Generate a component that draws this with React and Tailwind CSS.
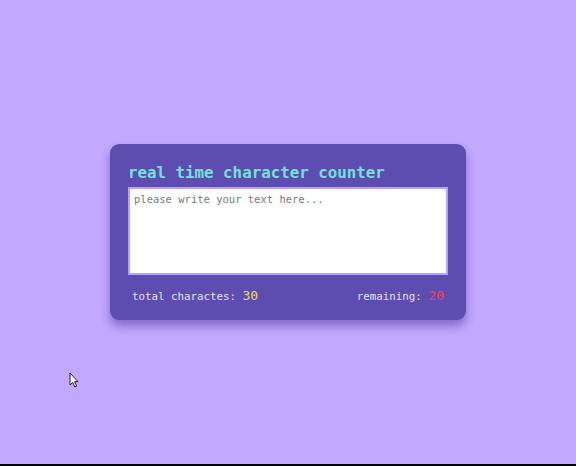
import React, { useState } from 'react'

export default function App() {
  const [text, setText] = useState('')
  const total = 30
  const remaining = 20

  return (
    <div className="w-[576px] h-[466px] bg-black">
      <div
        className="relative h-[464px] bg-[#c2a8fe] flex items-center justify-center"
        style={{ fontFamily: '"DejaVu Sans Mono", "Liberation Mono", monospace' }}
      >
        <div className="w-[356px] rounded-[9px] bg-[#5d4db1] px-[18px] pt-[18px] pb-[16px] shadow-[0_6px_10px_rgba(60,30,140,0.45)]">
          <h1 className="text-[15.8px] leading-[22px] font-bold text-[#6fe3d6]">
            real time character counter
          </h1>
          <textarea
            value={text}
            onChange={(e) => setText(e.target.value)}
            placeholder="please write your text here..."
            className="mt-[3px] block w-[320px] h-[88px] resize-none bg-white border-2 border-[#b7a2ff] px-[4px] py-[3px] text-[10.5px] leading-[14px] text-gray-700 placeholder:text-[#7a7a7a] outline-none"
          />
          <div className="mt-[14px] flex items-center justify-between px-[4px] text-[10.8px] leading-[14px] text-[#e4e0f2]">
            <p>
              total charactes: <span className="text-[13px] text-[#f0de5a]">{total}</span>
            </p>
            <p>
              remaining: <span className="text-[13px] text-[#f0463f]">{remaining}</span>
            </p>
          </div>
        </div>

        {/* mouse pointer left in the capture */}
        <svg className="absolute left-[69px] top-[372px]" width="10" height="16" viewBox="0 0 10 16">
          <path d="M1 1 L1 13 L3.8 10.4 L5.8 15 L7.6 14.2 L5.6 9.7 L9 9.7 Z" fill="#fff" stroke="#222" strokeWidth="1" />
        </svg>
      </div>
    </div>
  )
}
